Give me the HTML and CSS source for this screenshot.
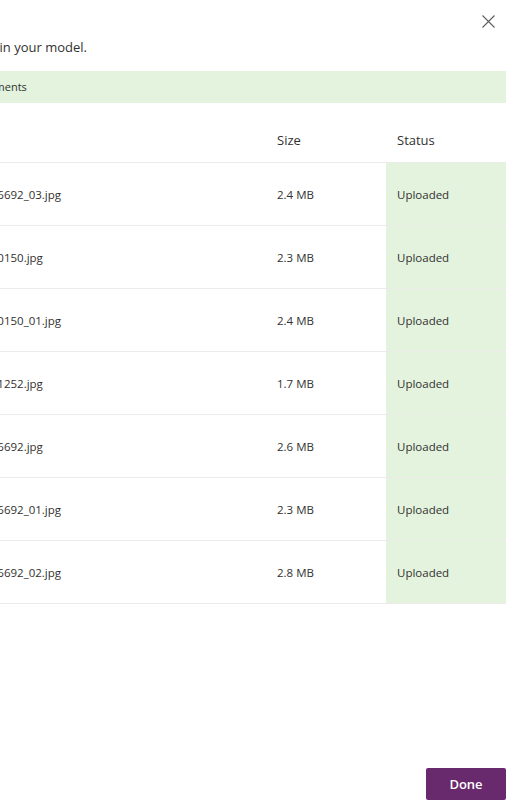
FILE: index.html
```html
<!DOCTYPE html>
<html lang="en">
<head>
<meta charset="utf-8">
<title>Upload images</title>
<link rel="stylesheet" href="styles.css">
</head>
<body>
<div class="viewport">
  <div class="panel">
    <div class="topbar">
      <button class="close" aria-label="Close">
        <svg width="13" height="13" viewBox="0 0 13 13"><path d="M0.5 0.5 L12.5 12.5 M12.5 0.5 L0.5 12.5" stroke="#605e5c" stroke-width="1.1" fill="none"/></svg>
      </button>
    </div>
    <p class="desc">Images will be used to detect objects in your model.</p>
    <div class="banner">Successfully uploaded 7 images as attachments</div>
    <div class="table">
      <div class="row head">
        <div class="cell name">Name</div>
        <div class="cell">Size</div>
        <div class="cell">Status</div>
      </div>
      <div class="row">
        <div class="cell name">Warehouse_Shelf_Photo_IMG_20190714_6692_03.jpg</div>
        <div class="cell">2.4 MB</div>
        <div class="cell status">Uploaded</div>
      </div>
      <div class="row">
        <div class="cell name">Warehouse_Shelf_Photo_IMG_20190714_0150.jpg</div>
        <div class="cell">2.3 MB</div>
        <div class="cell status">Uploaded</div>
      </div>
      <div class="row">
        <div class="cell name">Warehouse_Shelf_Photo_IMG_20190714_0150_01.jpg</div>
        <div class="cell">2.4 MB</div>
        <div class="cell status">Uploaded</div>
      </div>
      <div class="row">
        <div class="cell name">Warehouse_Shelf_Photo_IMG_20190714_1252.jpg</div>
        <div class="cell">1.7 MB</div>
        <div class="cell status">Uploaded</div>
      </div>
      <div class="row">
        <div class="cell name">Warehouse_Shelf_Photo_IMG_20190714_6692.jpg</div>
        <div class="cell">2.6 MB</div>
        <div class="cell status">Uploaded</div>
      </div>
      <div class="row">
        <div class="cell name">Warehouse_Shelf_Photo_IMG_20190714_6692_01.jpg</div>
        <div class="cell">2.3 MB</div>
        <div class="cell status">Uploaded</div>
      </div>
      <div class="row">
        <div class="cell name">Warehouse_Shelf_Photo_IMG_20190714_6692_02.jpg</div>
        <div class="cell">2.8 MB</div>
        <div class="cell status">Uploaded</div>
      </div>
    </div>
    <div class="footer">
      <button class="done">Done</button>
    </div>
  </div>
</div>
</body>
</html>
```
FILE: styles.css
```css
html, body {
  margin: 0;
  padding: 0;
  background: #ffffff;
}
body {
  font-family: "Open Sans", "Noto Sans", sans-serif;
  color: #323130;
}
.viewport {
  width: 525px;
  height: 812px;
  overflow: hidden;
}
.panel {
  margin-left: -254px;
  width: 779px;
  height: 812px;
  display: flex;
  flex-direction: column;
  box-sizing: border-box;
}
.topbar {
  display: flex;
  justify-content: flex-end;
  padding-top: 15px;
  padding-right: 30px;
  height: 12px;
}
.close {
  border: 0;
  background: none;
  padding: 0;
  width: 13px;
  height: 13px;
  display: block;
}
.close svg { display: block; }
.desc {
  margin: 11px 0 0 28px;
  font-size: 13px;
  line-height: 18px;
  color: #323130;
  white-space: nowrap;
}
.banner {
  margin-top: 15px;
  margin-right: 19px;
  height: 32px;
  background: #e3f3de;
  font-size: 11px;
  line-height: 32px;
  padding-left: 38px;
  color: #323130;
  white-space: nowrap;
}
.table {
  margin-right: 19px;
}
.row {
  display: grid;
  grid-template-columns: 1fr 120px 120px;
  height: 63px;
  box-sizing: border-box;
  border-bottom: 1px solid #edebe9;
}
.row.head {
  height: 60px;
}
.cell {
  padding-left: 11px;
  display: flex;
  align-items: center;
  font-size: 11.5px;
  white-space: nowrap;
}
.row.head .cell {
  font-size: 13px;
  padding-top: 14px;
  box-sizing: border-box;
}
.cell.name {
  padding-left: 32px;
}
.cell.status {
  background: #e3f3de;
}
.footer {
  margin-top: auto;
  display: flex;
  justify-content: flex-end;
  padding-right: 19px;
  padding-bottom: 12px;
}
.done {
  width: 80px;
  height: 32px;
  border: 0;
  border-radius: 2px;
  background: #68296d;
  color: #ffffff;
  font-family: "Open Sans", sans-serif;
  font-weight: 600;
  font-size: 13px;
  padding: 0;
}
```
